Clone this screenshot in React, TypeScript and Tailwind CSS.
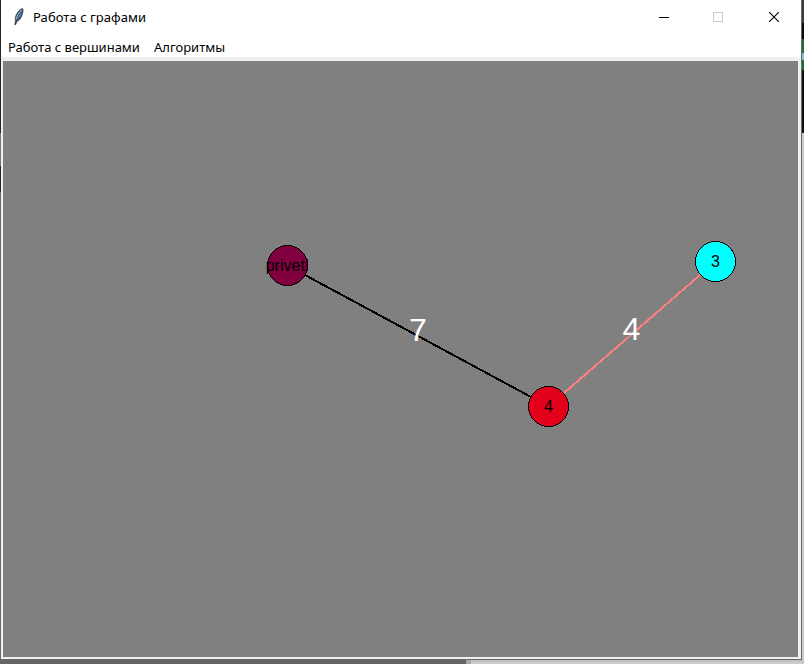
import React from "react";

type GraphNode = { label: string; x: number; y: number; fill: string };
type GraphEdge = { x1: number; y1: number; x2: number; y2: number; color: string; weight: string; tx: number; ty: number };

const nodes: GraphNode[] = [
  { label: "privet!", x: 284.5, y: 204.5, fill: "#800040" },
  { label: "4", x: 545.5, y: 345.5, fill: "#e3001b" },
  { label: "3", x: 712.5, y: 200.5, fill: "#00ffff" },
];

const edges: GraphEdge[] = [
  { x1: 302, y1: 214, x2: 528, y2: 336, color: "#000000", weight: "7", tx: 415, ty: 280 },
  { x1: 561, y1: 332, x2: 697, y2: 214, color: "#ff8080", weight: "4", tx: 628.5, ty: 279 },
];

function Feather() {
  return (
    <svg width="14" height="18" viewBox="0 0 14 18" className="shrink-0">
      <path d="M10.8 .5C8.5.7 5.8 3.3 4.4 6.3C3 9.2 2.8 11.6 3.4 13.2L2.7 16.5L4 16.5L4.6 13.5C6.5 13.4 8.8 10.8 9.8 8C10.9 5 11.6 2 10.8 .5Z" fill="#35485f" stroke="#3d4650" strokeWidth=".6" />
      <path d="M10.3 1.5C8.2 3 6.2 6 5.2 9.5L4.7 12.2C6.8 10.8 8.5 8 9.3 5.5Z" fill="#5c93d1" />
      <path d="M9.6 2C6.8 4.5 4.7 8 4 12" fill="none" stroke="#c1d4e5" strokeWidth=".9" />
      <path d="M9.8 3C7.2 6 5 10 3.5 16.5" fill="none" stroke="#28323e" strokeWidth=".7" />
    </svg>
  );
}

function TitleBar() {
  return (
    <header className="flex h-[34px] items-center bg-white">
      <div className="flex w-[643px] items-center pl-[11px]">
        <Feather />
        <h1 className="ml-[7px] h-[18px] w-[114px] whitespace-nowrap text-[13px] leading-[18px] tracking-[0.06px]">Работа с графами</h1>
      </div>
      <button className="flex h-[34px] w-[40px] items-center justify-center" aria-label="Свернуть">
        <svg width="10" height="10" shapeRendering="crispEdges"><path d="M0 5.5H10" stroke="#000" /></svg>
      </button>
      <button className="ml-[14px] flex h-[34px] w-[40px] items-center justify-center" aria-label="Развернуть">
        <svg width="10" height="10" shapeRendering="crispEdges"><path d="M.5 .5H9.5V9.5H.5Z" fill="none" stroke="#ccc" /></svg>
      </button>
      <button className="ml-[16px] flex h-[34px] w-[40px] items-center justify-center" aria-label="Закрыть">
        <svg width="10" height="10"><path d="M0 0L10 10M10 0L0 10" stroke="#000" strokeWidth="1.1" /></svg>
      </button>
    </header>
  );
}

function GraphCanvas() {
  return (
    <svg width="795" height="596" className="block bg-[#808080] font-['Liberation_Sans',Arial,sans-serif]">
      <g shapeRendering="crispEdges">
        {edges.map((e) => (
          <line key={e.weight} x1={e.x1} y1={e.y1} x2={e.x2} y2={e.y2} stroke={e.color} strokeWidth="2" />
        ))}
        {nodes.map((n) => (
          <circle key={n.label} cx={n.x} cy={n.y} r="20" fill={n.fill} stroke="#000" />
        ))}
      </g>
      {edges.map((e) => (
        <text key={e.weight} x={e.tx} y={e.ty} textAnchor="middle" className="fill-white text-[32px]">{e.weight}</text>
      ))}
      {nodes.map((n) => (
        <text key={n.label} x={n.x} y={n.y + 5.5} textAnchor="middle" className="fill-black text-[16px]">{n.label}</text>
      ))}
    </svg>
  );
}

export default function App() {
  return (
    <div className="h-[664px] w-[804px] overflow-hidden bg-[#787878] font-['Noto_Sans','Open_Sans',sans-serif] text-black">
      <div className="flex h-[660px]">
        <div className="flex w-px flex-col">
          <div className="h-[133px] bg-[#252329]" />
          <div className="h-[33px] bg-[#777]" />
          <div className="h-[26px] bg-[#252329]" />
          <div className="flex-1 bg-[#686868]" />
        </div>
        <main className="flex w-[801px] flex-col border-r border-b border-[#686868] bg-[#f0f0f0]">
          <TitleBar />
          <nav className="flex h-[23px] bg-white pl-[7px] text-[13px] leading-[26px]">
            <span className="w-[146px] whitespace-nowrap">Работа с вершинами</span>
            <span className="whitespace-nowrap">Алгоритмы</span>
          </nav>
          <div className="pt-[4px] pl-[2px]">
            <GraphCanvas />
          </div>
        </main>
        <div className="flex w-[2px] flex-col">
          <div className="h-[23px] bg-[#3b3a44]" />
          <div className="h-[16px] bg-[#0a0a10]" />
          <div className="h-[14px] bg-[#1c7130]" />
          <div className="h-[7px] bg-[#7cc4c5]" />
          <div className="h-[10px] bg-[#1c7130]" />
          <div className="h-[63px] bg-[#0b121b]" />
          <div className="flex-1 bg-[#cacaca]" />
        </div>
      </div>
      <div className="flex h-[4px]">
        <div className="w-[466px] bg-[#666464]" />
        <div className="w-[5px] bg-[#a3aaa5]" />
        <div className="flex-1 bg-gradient-to-b from-[#bcbcbc] to-[#d0d0d0]" />
      </div>
    </div>
  );
}
